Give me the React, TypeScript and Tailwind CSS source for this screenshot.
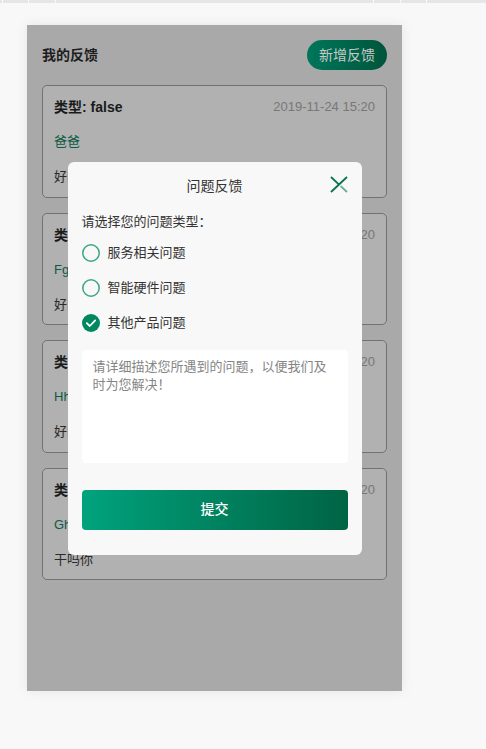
import React from "react";

const cards = [
  { line2: "爸爸", line3: "好的好的" },
  { line2: "Fgfhhj", line3: "好的好的" },
  { line2: "Hhhjj", line3: "好的好的" },
  { line2: "Ghjjk", line3: "干吗你" },
];

const options = [
  { label: "服务相关问题", checked: false },
  { label: "智能硬件问题", checked: false },
  { label: "其他产品问题", checked: true },
];

function Radio({ checked }: { checked: boolean }) {
  if (checked) {
    return (
      <svg width="18" height="18" viewBox="0 0 18 18">
        <circle cx="9" cy="9" r="9" fill="#00875f" />
        <path d="M4.8 9.2 L7.8 12 L13.2 6.4" fill="none" stroke="#fff" strokeWidth="1.8" strokeLinecap="round" strokeLinejoin="round" />
      </svg>
    );
  }
  return (
    <svg width="18" height="18" viewBox="0 0 18 18">
      <circle cx="9" cy="9" r="8.2" fill="none" stroke="#3ba584" strokeWidth="1.5" />
    </svg>
  );
}

export default function App() {
  return (
    <div
      className="min-h-[749px] bg-[#f8f8f8]"
      style={{ fontFamily: '"Liberation Sans", "Noto Sans CJK SC", sans-serif' }}
    >
      {/* top strip */}
      <div className="flex h-[3px] bg-[#e6e6e6]">
        <div className="w-[2px]" />
        <div className="w-[26px] border-l border-[#fafafa]" />
        <div className="w-[27px] border-l border-[#fafafa]" />
        <div className="w-[318px] border-l border-[#fafafa]" />
        <div className="w-[27px] border-l border-[#fafafa]" />
        <div className="w-[26px] border-l border-[#fafafa]" />
        <div className="flex-1 border-l border-[#fafafa]" />
      </div>

      <div className="relative ml-[27px] mt-[22px] h-[666px] w-[375px] bg-[#a9a9aa] shadow-[0_0_12px_rgba(0,0,0,0.08)]">
        <div className="px-[15px] pt-[15px]">
          <div className="flex h-[30px] items-center justify-between">
            <span className="text-[14px] font-bold text-[#1e1e1e]">我的反馈</span>
            <button className="h-[30px] w-[80px] rounded-full bg-gradient-to-r from-[#00765a] to-[#00553b] text-[14px] text-[#c9c9c9]">
              新增反馈
            </button>
          </div>

          <div className="mt-[15px] flex flex-col gap-[15px]">
            {cards.map((c, i) => (
              <div
                key={i}
                className="flex h-[112.5px] flex-col gap-[15px] rounded-[5px] border border-[#727272] bg-[#b1b1b1] px-[11px] pt-[11px]"
              >
                <div className="flex h-[20px] items-center justify-between leading-[20px]">
                  <span className="text-[14px] font-bold text-[#1a1a1a]">类型: false</span>
                  <span className="text-[13px] text-[#777777]">2019-11-24 15:20</span>
                </div>
                <div className="h-[20px] text-[13px] leading-[20px] text-[#0c5b45]">{c.line2}</div>
                <div className="h-[20px] text-[13px] leading-[20px] text-[#2a2a2a]">{c.line3}</div>
              </div>
            ))}
          </div>
        </div>

        {/* modal */}
        <div className="absolute inset-0 flex items-center justify-center">
          <div className="relative flex h-[393px] w-[294px] flex-col rounded-[6px] bg-[#f8f8f8] px-[14px] pb-[25px]">
            <div className="flex h-[50px] items-center justify-center text-[14px] text-[#333333]">问题反馈</div>
            <svg className="absolute right-[14px] top-[14px]" width="18" height="17" viewBox="0 0 18 17">
              <path d="M17 1 L1 16" stroke="#0a7050" strokeWidth="1.8" />
              <path d="M1 1 L9.3 8.8" stroke="#0a7050" strokeWidth="1.8" />
              <path d="M10.6 10 L17 16" stroke="#6aaf98" strokeWidth="1.8" />
            </svg>

            <div className="text-[13px] leading-[20px] text-[#333333]">请选择您的问题类型：</div>

            <div className="mt-[4px] flex flex-col">
              {options.map((o) => (
                <div key={o.label} className="flex h-[35px] items-center gap-[8px]">
                  <Radio checked={o.checked} />
                  <span className="text-[13px] text-[#333333]">{o.label}</span>
                </div>
              ))}
            </div>

            <div className="mt-[9px] h-[113px] rounded-[4px] bg-white px-[11px] pt-[8px] text-[13px] leading-[18px] text-[#858585]">
              请详细描述您所遇到的问题，以便我们及时为您解决！
            </div>

            <button className="mt-[27px] h-[40px] w-full rounded-[4px] bg-gradient-to-r from-[#00a37d] to-[#006444] text-[14px] font-medium text-white">
              提交
            </button>
          </div>
        </div>
      </div>
    </div>
  );
}
